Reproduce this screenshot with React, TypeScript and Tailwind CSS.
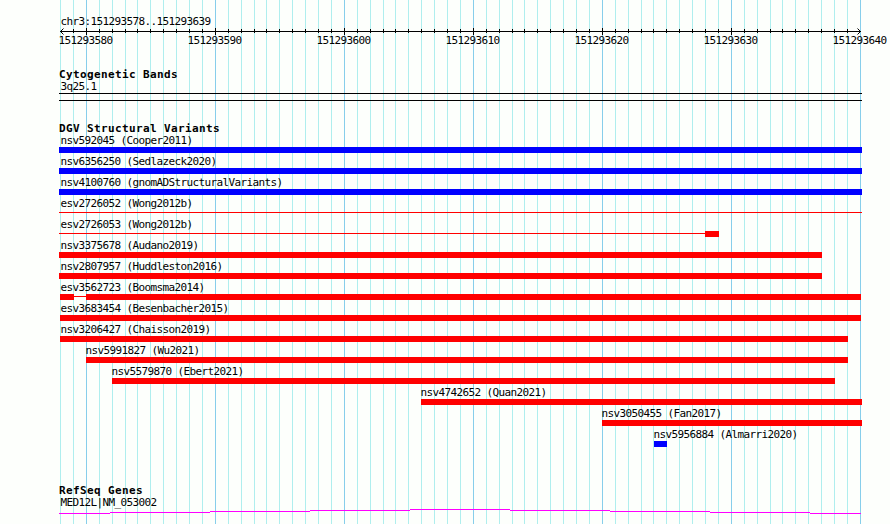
import React from 'react';

const GRID_START = 60;
const BASE_WIDTH = 12.9;
const FIRST_BASE = 151293578;

const gridLines = Array.from({ length: 63 }, (_, i) => ({
  x: Math.round(GRID_START + i * BASE_WIDTH),
  major: i % 10 === 2,
  position: FIRST_BASE + i,
}));

interface Segment {
  start: number;
  end: number;
  thin?: boolean;
}

interface Variant {
  label: string;
  labelX: number;
  color: 'blue' | 'red';
  segments: Segment[];
}

const variants: Variant[] = [
  { label: 'nsv592045 (Cooper2011)', labelX: 60, color: 'blue', segments: [{ start: 59, end: 862 }] },
  { label: 'nsv6356250 (Sedlazeck2020)', labelX: 60, color: 'blue', segments: [{ start: 59, end: 862 }] },
  { label: 'nsv4100760 (gnomADStructuralVariants)', labelX: 60, color: 'blue', segments: [{ start: 59, end: 862 }] },
  { label: 'esv2726052 (Wong2012b)', labelX: 60, color: 'red', segments: [{ start: 59, end: 862, thin: true }] },
  {
    label: 'esv2726053 (Wong2012b)',
    labelX: 60,
    color: 'red',
    segments: [{ start: 59, end: 705, thin: true }, { start: 705, end: 719 }],
  },
  { label: 'nsv3375678 (Audano2019)', labelX: 60, color: 'red', segments: [{ start: 59, end: 822 }] },
  { label: 'nsv2807957 (Huddleston2016)', labelX: 60, color: 'red', segments: [{ start: 59, end: 822 }] },
  {
    label: 'esv3562723 (Boomsma2014)',
    labelX: 60,
    color: 'red',
    segments: [{ start: 60, end: 74 }, { start: 74, end: 86, thin: true }, { start: 86, end: 861 }],
  },
  { label: 'esv3683454 (Besenbacher2015)', labelX: 60, color: 'red', segments: [{ start: 60, end: 861 }] },
  { label: 'nsv3206427 (Chaisson2019)', labelX: 60, color: 'red', segments: [{ start: 60, end: 848 }] },
  { label: 'nsv5991827 (Wu2021)', labelX: 85, color: 'red', segments: [{ start: 86, end: 848 }] },
  { label: 'nsv5579870 (Ebert2021)', labelX: 111, color: 'red', segments: [{ start: 112, end: 835 }] },
  { label: 'nsv4742652 (Quan2021)', labelX: 420, color: 'red', segments: [{ start: 421, end: 862 }] },
  { label: 'nsv3050455 (Fan2017)', labelX: 601, color: 'red', segments: [{ start: 602, end: 862 }] },
  { label: 'nsv5956884 (Almarri2020)', labelX: 653, color: 'blue', segments: [{ start: 654, end: 667 }] },
];

function Grid() {
  return (
    <svg className="absolute inset-0" width="890" height="524" shapeRendering="crispEdges">
      {gridLines.map(({ x, major }) => (
        <rect key={x} x={x} y="0" width="1" height="524" fill={major ? '#87ceeb' : '#afeeee'} />
      ))}
    </svg>
  );
}

function Axis() {
  return (
    <svg className="block" width="890" height="21">
      <g shapeRendering="crispEdges">
        <rect x="60" y="3" width="801" height="1" />
        {gridLines.slice(1, -1).map(({ x, major }) => (
          <rect key={x} x={x} y={major ? 0 : 1} width="1" height={major ? 7 : 4} />
        ))}
      </g>
      <path d="M63.5 0.5 60.5 3.5 63.5 6.5M857.5 0.5 860.5 3.5 857.5 6.5" fill="none" stroke="black" />
      {gridLines.filter((line) => line.major).map(({ x, position }) => (
        <text key={x} x={x - 27.5} y="16">
          {position}
        </text>
      ))}
    </svg>
  );
}

function Heading({ children }: { children: React.ReactNode }) {
  return <h2 className="h-3 pl-[59px] font-bold leading-3 tracking-[0.38px]">{children}</h2>;
}

function VariantRow({ variant }: { variant: Variant }) {
  return (
    <div className="h-[21px]">
      <div className="h-3 leading-3" style={{ paddingLeft: variant.labelX + 0.5 }}>
        {variant.label}
      </div>
      <div className="flex h-1.5" style={{ paddingLeft: variant.segments[0].start }}>
        {variant.segments.map((segment) => (
          <div
            key={segment.start}
            className={`${segment.thin ? 'mt-0.5 h-px' : 'h-1.5'} ${variant.color === 'blue' ? 'bg-[#0000ff]' : 'bg-[#ff0000]'}`}
            style={{ width: segment.end - segment.start }}
          />
        ))}
      </div>
    </div>
  );
}

export default function App() {
  return (
    <div className="relative h-[524px] w-[890px] overflow-hidden bg-[#fdfffc] font-['DejaVu_Sans_Mono',monospace] text-[11px] tracking-[-0.622px] whitespace-pre text-black">
      <Grid />
      <main className="relative flex flex-col">
        <div className="mt-4 h-3 pl-[60.5px] leading-3">chr3:151293578..151293639</div>
        <Axis />

        <section className="mt-5">
          <Heading>Cytogenetic Bands</Heading>
          <div className="h-3 pl-[60.5px] leading-3">3q25.1</div>
          <div className="ml-[59px] h-2 w-[803px] border-y border-black" />
        </section>

        <section className="mt-[22px]">
          <Heading>DGV Structural Variants</Heading>
          {variants.map((variant) => (
            <VariantRow key={variant.label} variant={variant} />
          ))}
        </section>

        <section className="mt-[35px]">
          <Heading>RefSeq Genes</Heading>
          <div className="h-3 pl-[60.5px] leading-3">MED12L|NM_053002</div>
          <svg className="block" width="890" height="11" shapeRendering="crispEdges">
            <path
              d="M59 4.5H110M110 3.5H210M210 2.5H310M310 1.5H410M410 0.5H510M510 1.5H610M610 2.5H710M710 3.5H810M810 4.5H861"
              stroke="#ff00ff"
              fill="none"
            />
          </svg>
        </section>
      </main>
    </div>
  );
}
